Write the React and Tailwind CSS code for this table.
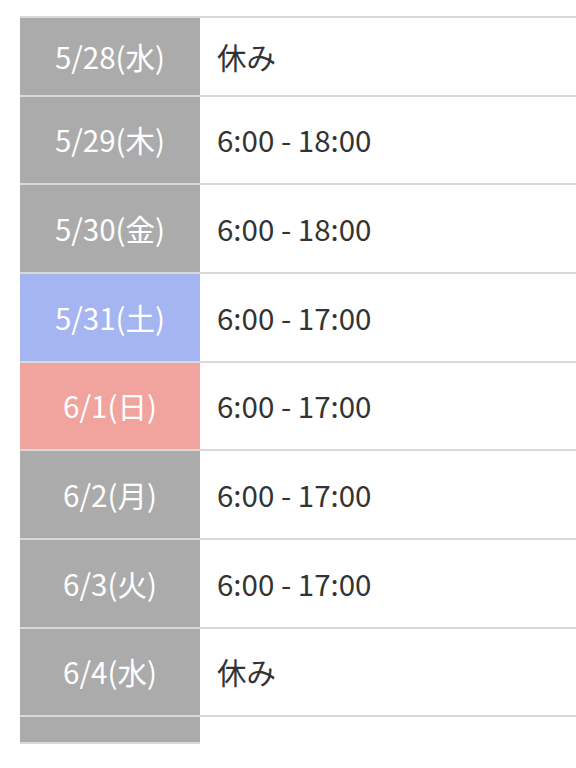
import React from 'react';

const rows = [
  { date: '5/28(水)', time: '休み', h: 'h-[77px]', bg: 'bg-[#ababab]' },
  { date: '5/29(木)', time: '6:00 - 18:00', h: 'h-[86px]', bg: 'bg-[#ababab]' },
  { date: '5/30(金)', time: '6:00 - 18:00', h: 'h-[87px]', bg: 'bg-[#ababab]' },
  { date: '5/31(土)', time: '6:00 - 17:00', h: 'h-[87px]', bg: 'bg-[#a5b5f1]' },
  { date: '6/1(日)', time: '6:00 - 17:00', h: 'h-[86px]', bg: 'bg-[#f1a39d]' },
  { date: '6/2(月)', time: '6:00 - 17:00', h: 'h-[87px]', bg: 'bg-[#ababab]' },
  { date: '6/3(火)', time: '6:00 - 17:00', h: 'h-[87px]', bg: 'bg-[#ababab]' },
  { date: '6/4(水)', time: '休み', h: 'h-[86px]', bg: 'bg-[#ababab]' },
];

export default function App() {
  return (
    <div
      className="w-[576px] h-[768px] bg-white overflow-hidden pt-4 pl-5"
      style={{ fontFamily: '"Noto Sans CJK JP", "Noto Sans", sans-serif' }}
    >
      <div className="border-t-2 border-[#d9d9d9]">
        {rows.map((r) => (
          <div key={r.date} className="flex border-b-2 border-[#d9d9d9]">
            <div
              className={`w-[180px] shrink-0 flex items-center justify-center text-white text-[29.5px] leading-none ${r.h} ${r.bg}`}
            >
              {r.date}
            </div>
            <div className="flex-1 flex items-center pl-[17px] text-[#333333] text-[29.5px] leading-none">
              {r.time}
            </div>
          </div>
        ))}
        <div className="flex">
          <div className="w-[180px] h-[27px] bg-[#ababab] border-b-2 border-[#d9d9d9]" />
        </div>
      </div>
    </div>
  );
}
